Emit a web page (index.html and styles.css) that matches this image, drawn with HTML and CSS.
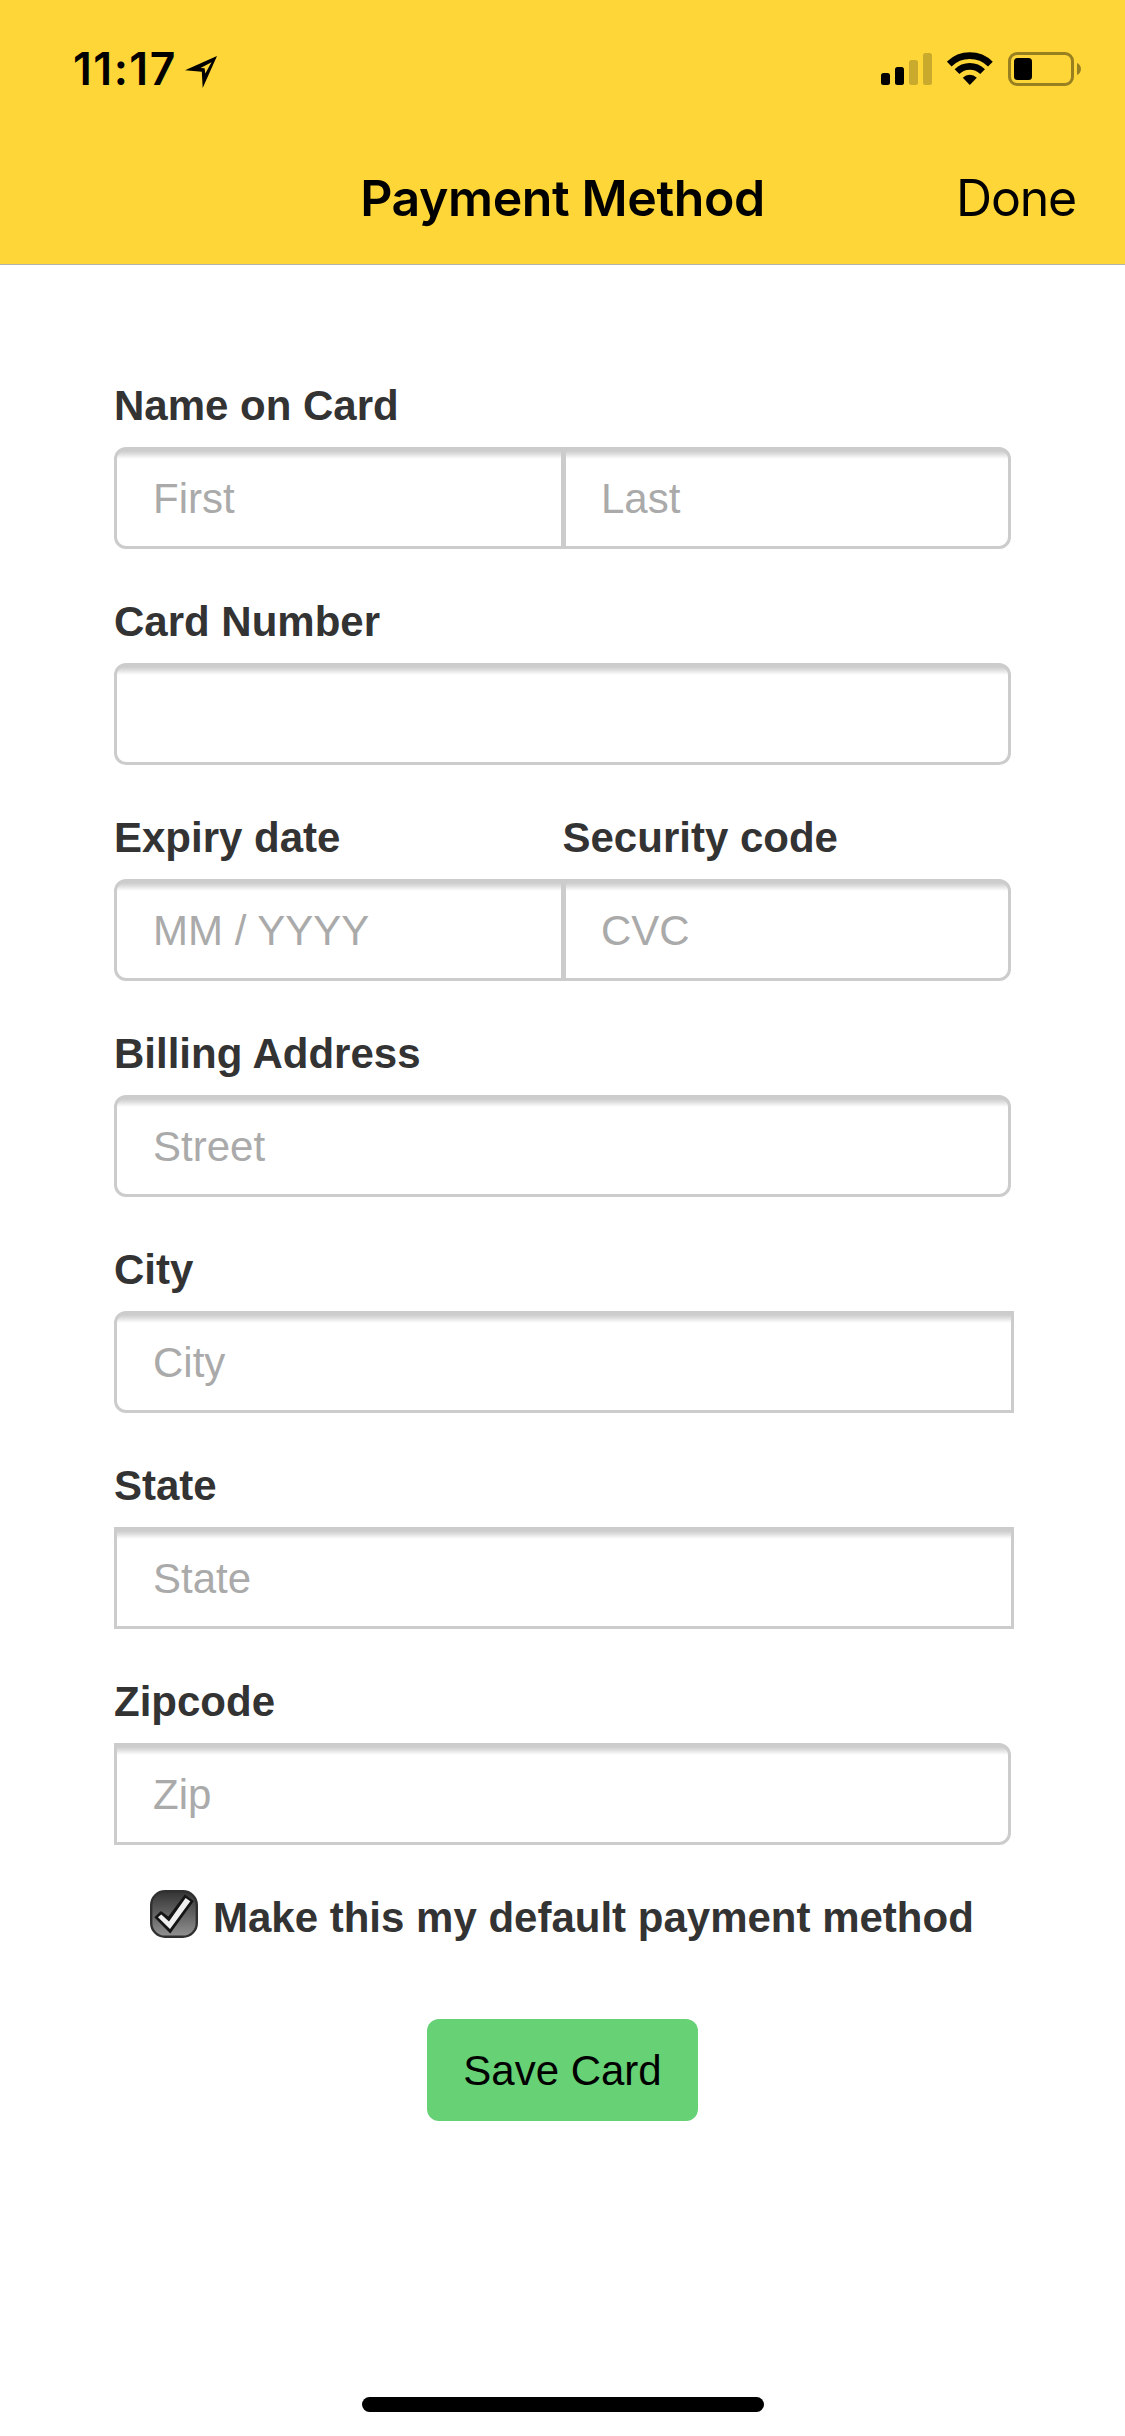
FILE: index.html
```html
<!DOCTYPE html>
<html lang="en">
<head>
<meta charset="utf-8">
<title>Payment Method</title>
<link rel="stylesheet" href="styles.css">
</head>
<body>
<div class="screen">
  <header class="header">
    <div class="status">
      <div class="status-left">
        <span class="time">11:17</span>
        <svg class="location" width="33" height="33" viewBox="0 0 33 33"><path fill-rule="evenodd" d="M0 14.3 32 0 17.7 32 16.8 15.7Z M15.5 12 19.6 12.2 20.3 17.5 26.5 6.3Z"/></svg>
      </div>
      <div class="status-right">
        <svg width="51" height="34" viewBox="0 0 51 34"><rect y="21" width="9" height="12" rx="2.5"/><rect x="14" y="15" width="9" height="18" rx="2.5"/><g opacity=".2"><rect x="28" y="8" width="9" height="25" rx="2.5"/><rect x="42" y="1" width="9" height="32" rx="2.5"/></g></svg>
        <svg width="46" height="34" viewBox="0 0 46 34"><g fill="none" stroke="#000" stroke-width="6.7"><path d="M2.2 12.1A29.3 29.3 0 0 1 43.4 12.1"/><path d="M10 19.7A18.2 18.2 0 0 1 35.6 19.7"/></g><path d="M15.8 25.7A10 10 0 0 1 29.8 25.7L22.8 33Z"/></svg>
        <svg width="73" height="34" viewBox="0 0 73 34"><rect x="1.5" y="1.5" width="63" height="31" rx="7.5" fill="none" stroke="#000" stroke-width="3" opacity=".4"/><rect x="6" y="6" width="18" height="22" rx="3.5"/><path d="M69 11C74.3 13 74.3 21 69 23Z" opacity=".4"/></svg>
      </div>
    </div>
    <nav class="nav">
      <h1 class="title">Payment Method</h1>
      <a class="done">Done</a>
    </nav>
  </header>
  <form class="form">
    <div class="group">
      <label class="label">Name on Card</label>
      <div class="row"><input class="field first" placeholder="First"><input class="field last" placeholder="Last"></div>
    </div>
    <div class="group">
      <label class="label">Card Number</label>
      <input class="field">
    </div>
    <div class="group">
      <div class="row"><label class="label half">Expiry date</label><label class="label half">Security code</label></div>
      <div class="row"><input class="field first" placeholder="MM / YYYY"><input class="field last" placeholder="CVC"></div>
    </div>
    <div class="group">
      <label class="label">Billing Address</label>
      <input class="field" placeholder="Street">
    </div>
    <div class="group">
      <label class="label">City</label>
      <input class="field city" placeholder="City">
    </div>
    <div class="group">
      <label class="label">State</label>
      <input class="field state" placeholder="State">
    </div>
    <div class="group">
      <label class="label">Zipcode</label>
      <input class="field zip" placeholder="Zip">
    </div>
    <div class="default">
      <svg class="check" width="48" height="48" viewBox="0 0 48 48">
        <defs><linearGradient id="box" x2="0" y2="1"><stop stop-color="#333"/><stop offset="1" stop-color="#929292"/></linearGradient></defs>
        <rect x="1.2" y="1.2" width="45.6" height="45.6" rx="13.8" fill="url(#box)" stroke="#303030" stroke-width="2.4"/>
        <path fill="#151515" d="M4.3 27.3 11 21 18.3 26.6 34.8 4.6 43.8 11 20.3 43.5Z"/>
        <path fill="#f0f0f0" d="M8 27.3 11.3 24.4 19 31.6 35.6 8 40.3 11.3 20 39Z"/>
      </svg>
      <span class="default-text">Make this my default payment method</span>
    </div>
    <button class="save" type="button">Save Card</button>
  </form>
  <div class="home"></div>
</div>
</body>
</html>
```
FILE: styles.css
```css
* { box-sizing: border-box; }
body { margin: 0; background: #fff; }
.screen {
  width: 1125px;
  height: 2436px;
  display: flex;
  flex-direction: column;
  align-items: center;
  font-family: "Liberation Sans", Arial, sans-serif;
  font-size: 42px;
  color: #333;
}
.header {
  width: 100%;
  height: 265px;
  background: #fed638;
  border-bottom: 1px solid #b2b2a8;
  color: #000;
  font-family: Inter, sans-serif;
}
.status {
  height: 132px;
  padding: 52px 44px 0 73px;
  display: flex;
  justify-content: space-between;
  align-items: flex-start;
}
.status-left { display: flex; align-items: flex-start; }
.status-right { display: flex; gap: 15px; }
.time {
  width: 112px;
  margin-top: -13px;
  font-size: 44.5px;
  line-height: 60px;
  font-weight: 600;
  letter-spacing: 1.5px;
}
.location { margin-top: 4px; }
.nav {
  height: 132px;
  padding: 0 49px;
  display: grid;
  grid-template-columns: 1fr auto 1fr;
  align-items: center;
}
.title {
  grid-column: 2;
  margin: 0;
  font-size: 50px;
  font-weight: 600;
  letter-spacing: -0.4px;
}
.done { justify-self: end; font-size: 50px; letter-spacing: -1.2px; }
.form {
  width: 897px;
  padding-top: 110px;
  display: flex;
  flex-direction: column;
  align-items: center;
}
.group { width: 100%; margin-bottom: 42px; }
.row { display: flex; }
.label {
  display: block;
  height: 60px;
  margin-bottom: 12px;
  line-height: 62px;
  font-weight: 700;
}
.half { width: 50%; }
.field {
  display: block;
  width: 100%;
  height: 102px;
  margin: 0;
  padding: 2px 36px 0;
  border: 3px solid #ccc;
  border-radius: 12px;
  background: linear-gradient(#ccc 0, #cdcdcd 1px, #dedede 4px, #f3f3f3 7px, #fff 9px);
  font: inherit;
  outline: none;
}
.field::placeholder { color: #aaa; opacity: 1; }
.first { width: 450px; border-radius: 12px 0 0 12px; }
.last { width: 447px; padding-left: 35px; border-left-width: 2px; border-radius: 0 12px 12px 0; }
.city { width: 900px; border-radius: 12px 0 0 12px; }
.state { width: 900px; border-radius: 0; }
.zip { border-radius: 0 12px 12px 0; }
.default {
  width: 100%;
  height: 60px;
  padding-left: 36px;
  display: flex;
  gap: 15px;
  align-items: flex-start;
  white-space: nowrap;
  font-weight: 700;
  line-height: 62px;
}
.check { margin-top: 3px; flex: none; }
.save {
  width: 271px;
  height: 102px;
  margin-top: 72px;
  padding: 2px 0 0;
  border: 0;
  border-radius: 12px;
  background: #67d176;
  color: #000;
  font: inherit;
}
.home {
  width: 402px;
  height: 15px;
  margin: auto 0 24px;
  border-radius: 8px;
  background: #000;
}
```
